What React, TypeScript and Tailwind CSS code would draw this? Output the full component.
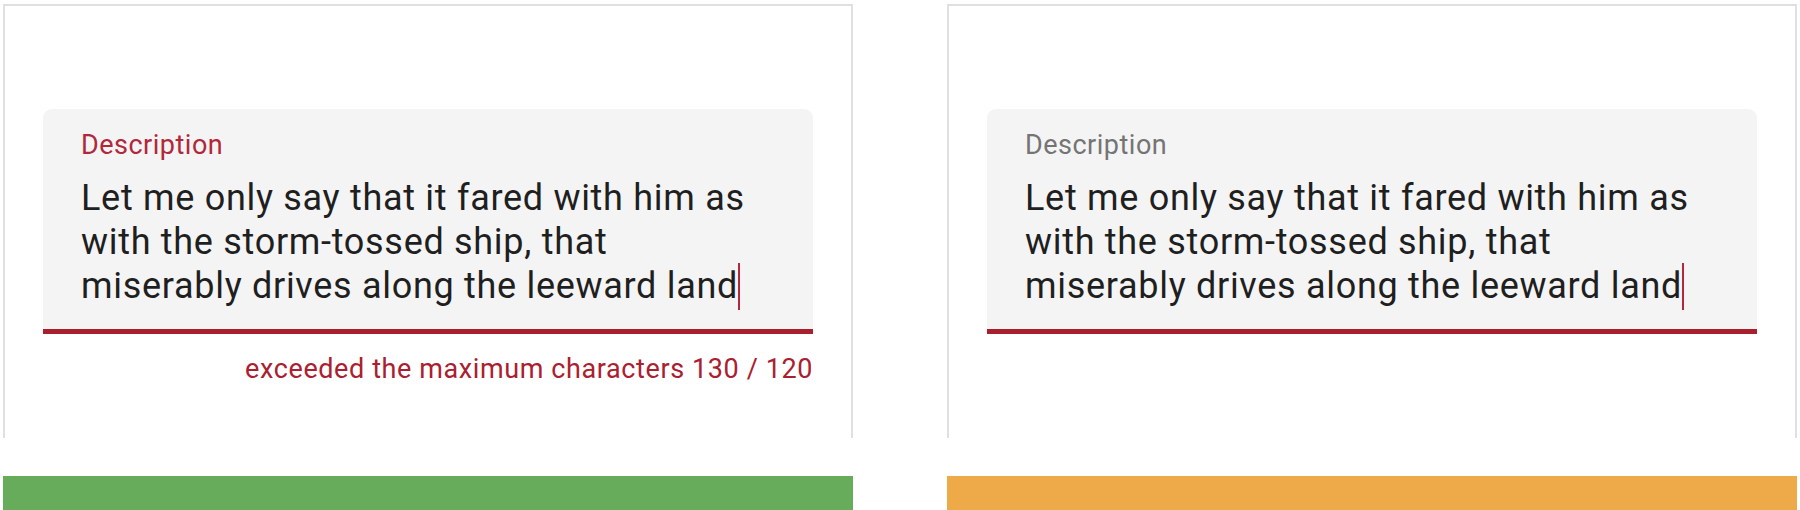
import React from 'react';

type FieldProps = {
  focused?: boolean;
  error?: string;
};

const LINES = [
  'Let me only say that it fared with him as',
  'with the storm-tossed ship, that',
  'miserably drives along the leeward land',
];

const DescriptionField: React.FC<FieldProps> = ({ focused, error }) => {
  return (
    <div className="flex flex-col">
      <div className="rounded-t-[9px] bg-[#f4f4f4] px-[38px] pt-[23px] pb-[21px]">
        <div
          className={
            focused
              ? 'text-[27px] leading-[27px] tracking-[0.5px] text-[#b0283a]'
              : 'text-[27px] leading-[27px] tracking-[0.5px] text-[#747474]'
          }
        >
          Description
        </div>
        <div className="mt-[16.5px] text-[36px] leading-[44px] tracking-[0.7px] text-[#1f1f1f]">
          {LINES.map((line, i) => (
            <div key={i} className="whitespace-nowrap">
              {line}
              {i === LINES.length - 1 && (
                <span className="relative">
                  <span className="absolute left-0 top-[-2px] h-[47px] w-[2px] bg-[#b0283a]" />
                </span>
              )}
            </div>
          ))}
        </div>
      </div>
      <div className="h-[5px] bg-[#a8202d]" />
      {error && (
        <div className="mt-[22px] text-right text-[27px] leading-[27px] tracking-[0.6px] text-[#ab2030]">
          {error}
        </div>
      )}
    </div>
  );
};

const Panel: React.FC<{ bar: string; children: React.ReactNode }> = ({ bar, children }) => (
  <div className="flex w-[850px] flex-col">
    <div className="h-[434px] border-x-2 border-t-2 border-[#e0e0e0] bg-white px-[38px] pt-[103px]">
      {children}
    </div>
    <div className={`mt-[38px] h-[34px] ${bar}`} />
  </div>
);

export default function App() {
  return (
    <div className="flex h-[510px] w-[1800px] gap-[94px] overflow-hidden bg-white pl-[3px] pt-[4px] font-['Roboto',sans-serif]">
      <Panel bar="bg-[#66ac5b]">
        <DescriptionField focused error="exceeded the maximum characters 130 / 120" />
      </Panel>
      <Panel bar="bg-[#eeaa48]">
        <DescriptionField />
      </Panel>
    </div>
  );
}
